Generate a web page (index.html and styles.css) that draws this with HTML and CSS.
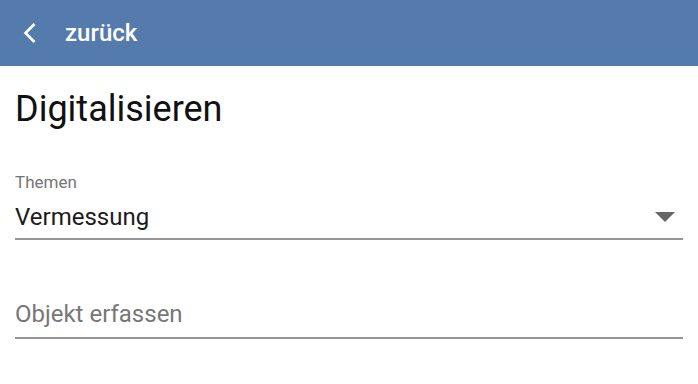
FILE: index.html
```html
<!DOCTYPE html>
<html lang="de">
<head>
<meta charset="utf-8">
<title>Digitalisieren</title>
<link rel="stylesheet" href="styles.css">
</head>
<body>
<header class="topbar">
  <svg class="back-icon" viewBox="0 0 16 22" width="16" height="22" aria-hidden="true">
    <path d="M13.5 2 L4.5 11 L13.5 20" fill="none" stroke="#fff" stroke-width="2.6" stroke-linecap="butt" stroke-linejoin="miter"/>
  </svg>
  <span class="back-label">zurück</span>
</header>
<main class="content">
  <h1 class="title">Digitalisieren</h1>
  <div class="field">
    <div class="field-label">Themen</div>
    <div class="select-row">
      <span class="select-value">Vermessung</span>
      <span class="caret"></span>
    </div>
  </div>
  <div class="field-input">
    <div class="placeholder">Objekt erfassen</div>
  </div>
</main>
</body>
</html>
```
FILE: styles.css
```css
html, body {
  margin: 0;
  padding: 0;
  background: #fff;
  font-family: Roboto, "Liberation Sans", Arial, sans-serif;
}
.topbar {
  height: 66px;
  background: #547bab;
  display: flex;
  align-items: center;
  padding-left: 21px;
  color: #fff;
}
.back-icon {
  display: block;
}
.back-label {
  margin-left: 28px;
  font-size: 24px;
  font-weight: 500;
  line-height: 28px;
}
.content {
  padding: 0 15px;
}
.title {
  margin: 23px 0 0;
  font-size: 36px;
  font-weight: 400;
  line-height: 40px;
  color: #111;
}
.field {
  margin-top: 44px;
}
.field-label {
  font-size: 17px;
  line-height: 18px;
  color: #757575;
}
.select-row {
  margin-top: 12px;
  display: flex;
  align-items: center;
  justify-content: space-between;
  padding-bottom: 7px;
  border-bottom: 2px solid #959595;
}
.select-value {
  font-size: 24px;
  line-height: 28px;
  color: #1c1c1c;
}
.caret {
  width: 0;
  height: 0;
  border-left: 10px solid transparent;
  border-right: 10px solid transparent;
  border-top: 10px solid #666;
  margin-right: 8px;
}
.field-input {
  margin-top: 60px;
  padding-bottom: 9px;
  border-bottom: 2px solid #959595;
}
.placeholder {
  font-size: 24px;
  line-height: 28px;
  color: #777;
}
```
